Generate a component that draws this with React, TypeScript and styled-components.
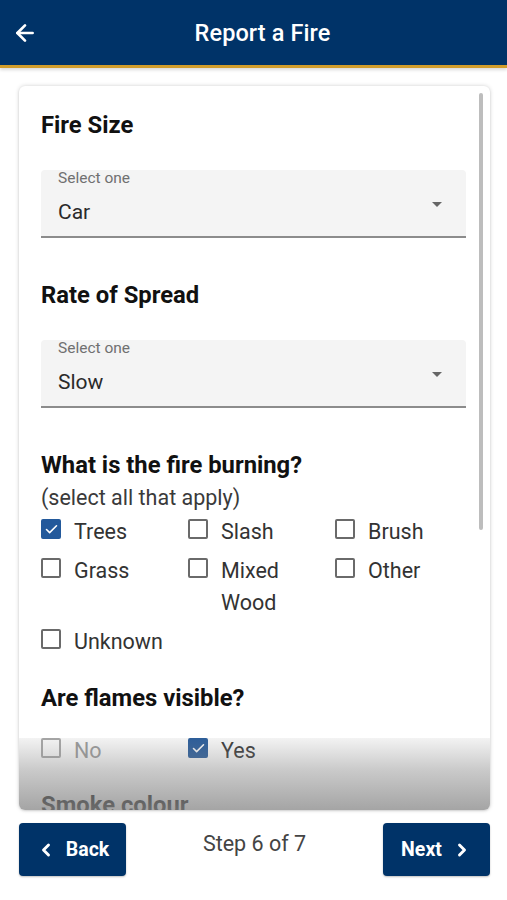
import styled, { createGlobalStyle } from 'styled-components';
import { ArrowLeft, ChevronLeft, ChevronRight, Check } from 'lucide-react';

const GlobalStyle = createGlobalStyle`
  html, body {
    margin: 0;
    padding: 0;
    background: #ffffff;
    font-family: Roboto, "Liberation Sans", Arial, sans-serif;
  }
  * { box-sizing: border-box; }
`;

const Page = styled.div`
  width: 507px;
  height: 900px;
  display: flex;
  flex-direction: column;
  overflow: hidden;
`;

const Header = styled.header`
  height: 68px;
  flex-shrink: 0;
  background: #003368;
  border-bottom: 3px solid #d19d2b;
  box-shadow: 0 2px 3px rgba(0, 0, 0, 0.15);
  display: flex;
  align-items: center;
  padding: 0 0 0 12px;
  color: #ffffff;
`;

const BackIcon = styled.span`
  display: flex;
  width: 26px;
`;

const Title = styled.h1`
  flex: 1;
  margin: 0 20px 0 0;
  text-align: center;
  font-size: 23.5px;
  font-weight: 500;
  letter-spacing: 0.1px;
`;

const Main = styled.main`
  flex: 1;
  display: flex;
  flex-direction: column;
  padding: 18px 17px 0 19px;
`;

const Card = styled.section`
  position: relative;
  height: 724px;
  overflow: hidden;
  background: #ffffff;
  border-radius: 6px;
  box-shadow: 0 0 4px rgba(0, 0, 0, 0.18), 0 1px 2px rgba(0, 0, 0, 0.1);
  padding: 25px 24px 0 22px;
`;

const ScrollThumb = styled.div`
  position: absolute;
  top: 7px;
  right: 7px;
  width: 4px;
  height: 437px;
  border-radius: 2px;
  background: #bdbdbd;
`;

const Fade = styled.div`
  position: absolute;
  left: 0;
  right: 0;
  bottom: 0;
  height: 72px;
  background: linear-gradient(180deg, rgba(136, 136, 136, 0.1) 0%, rgba(136, 136, 136, 0.45) 45%, rgba(136, 136, 136, 0.76) 100%);
  pointer-events: none;
`;

const Heading = styled.h2<{ $gap?: number }>`
  margin: 0 0 ${p => p.$gap ?? 31}px;
  font-size: 23.8px;
  line-height: 28px;
  font-weight: 700;
  color: #111111;
`;

const Field = styled.div`
  position: relative;
  height: 68px;
  background: #f4f4f4;
  border-radius: 4px 4px 0 0;
  border-bottom: 2px solid #8c8c8c;
  padding: 0 17px;
  margin-bottom: 43px;
`;

const FieldLabel = styled.div`
  font-size: 15.5px;
  line-height: 16px;
  color: #707070;
`;

const FieldValue = styled.div`
  margin-top: 14px;
  font-size: 21px;
  line-height: 24px;
  color: #2a2a2a;
`;

const Caret = styled.span`
  position: absolute;
  right: 24px;
  top: 32px;
  width: 0;
  height: 0;
  border-left: 5.5px solid transparent;
  border-right: 5.5px solid transparent;
  border-top: 5.5px solid #666666;
`;

const Hint = styled.p`
  margin: -28px 0 6px;
  font-size: 21.5px;
  line-height: 24px;
  color: #3a3a3a;
`;

const OptionGrid = styled.div<{ $gapBottom: number }>`
  display: grid;
  grid-template-columns: 147px 147px 1fr;
  row-gap: 7px;
  margin-bottom: ${p => p.$gapBottom}px;
`;

const Option = styled.label<{ $muted?: boolean }>`
  display: flex;
  align-items: flex-start;
  gap: 13px;
  font-size: 21.5px;
  line-height: 32px;
  color: ${p => (p.$muted ? '#9a9a9a' : '#333333')};
`;

const Box = styled.span<{ $checked?: boolean; $muted?: boolean }>`
  flex-shrink: 0;
  margin-top: 3px;
  width: 20px;
  height: 20px;
  border-radius: 2px;
  display: flex;
  align-items: center;
  justify-content: center;
  border: 2px solid ${p => (p.$checked ? '#23599b' : p.$muted ? '#a8a8a8' : '#6a6a6a')};
  background: ${p => (p.$checked ? '#23599b' : '#ffffff')};
  color: #ffffff;
`;

const OptionText = styled.span`
  max-width: 105px;
`;

const Footer = styled.div`
  display: flex;
  align-items: flex-start;
  justify-content: space-between;
  padding-top: 13px;
`;

const NavButton = styled.button`
  width: 107px;
  height: 53px;
  border: none;
  border-radius: 4px;
  background: #003368;
  color: #ffffff;
  font-family: Roboto, "Liberation Sans", Arial, sans-serif;
  font-size: 19.5px;
  font-weight: 700;
  display: flex;
  align-items: center;
  justify-content: center;
  gap: 10px;
  box-shadow: 0 1px 2px rgba(0, 0, 0, 0.25);
`;

const StepText = styled.div`
  padding-top: 8px;
  font-size: 21.5px;
  line-height: 26px;
  color: #444444;
`;

type Opt = { label: string; checked?: boolean; muted?: boolean };

const burning: Opt[] = [
  { label: 'Trees', checked: true },
  { label: 'Slash' },
  { label: 'Brush' },
  { label: 'Grass' },
  { label: 'Mixed Wood' },
  { label: 'Other' },
  { label: 'Unknown' },
];

const flames: Opt[] = [{ label: 'No', muted: true }, { label: 'Yes', checked: true }];

function Options({ items, gapBottom }: { items: Opt[]; gapBottom: number }) {
  return (
    <OptionGrid $gapBottom={gapBottom}>
      {items.map(o => (
        <Option key={o.label} $muted={o.muted}>
          <Box $checked={o.checked} $muted={o.muted}>
            {o.checked && <Check size={15} strokeWidth={2.5} />}
          </Box>
          <OptionText>{o.label}</OptionText>
        </Option>
      ))}
    </OptionGrid>
  );
}

function Select({ value }: { value: string }) {
  return (
    <Field>
      <FieldLabel>Select one</FieldLabel>
      <FieldValue>{value}</FieldValue>
      <Caret />
    </Field>
  );
}

export default function App() {
  return (
    <>
      <GlobalStyle />
      <Page>
        <Header>
          <BackIcon>
            <ArrowLeft size={26} strokeWidth={2.5} />
          </BackIcon>
          <Title>Report a Fire</Title>
        </Header>
        <Main>
          <Card>
            <Heading>Fire Size</Heading>
            <Select value="Car" />
            <Heading>Rate of Spread</Heading>
            <Select value="Slow" />
            <Heading $gap={35}>What is the fire burning?</Heading>
            <Hint>(select all that apply)</Hint>
            <Options items={burning} gapBottom={26} />
            <Heading $gap={23}>Are flames visible?</Heading>
            <Options items={flames} gapBottom={24} />
            <Heading>Smoke colour</Heading>
            <Fade />
            <ScrollThumb />
          </Card>
          <Footer>
            <NavButton>
              <ChevronLeft size={20} strokeWidth={3.5} />
              Back
            </NavButton>
            <StepText>Step 6 of 7</StepText>
            <NavButton>
              Next
              <ChevronRight size={20} strokeWidth={3.5} />
            </NavButton>
          </Footer>
        </Main>
      </Page>
    </>
  );
}
